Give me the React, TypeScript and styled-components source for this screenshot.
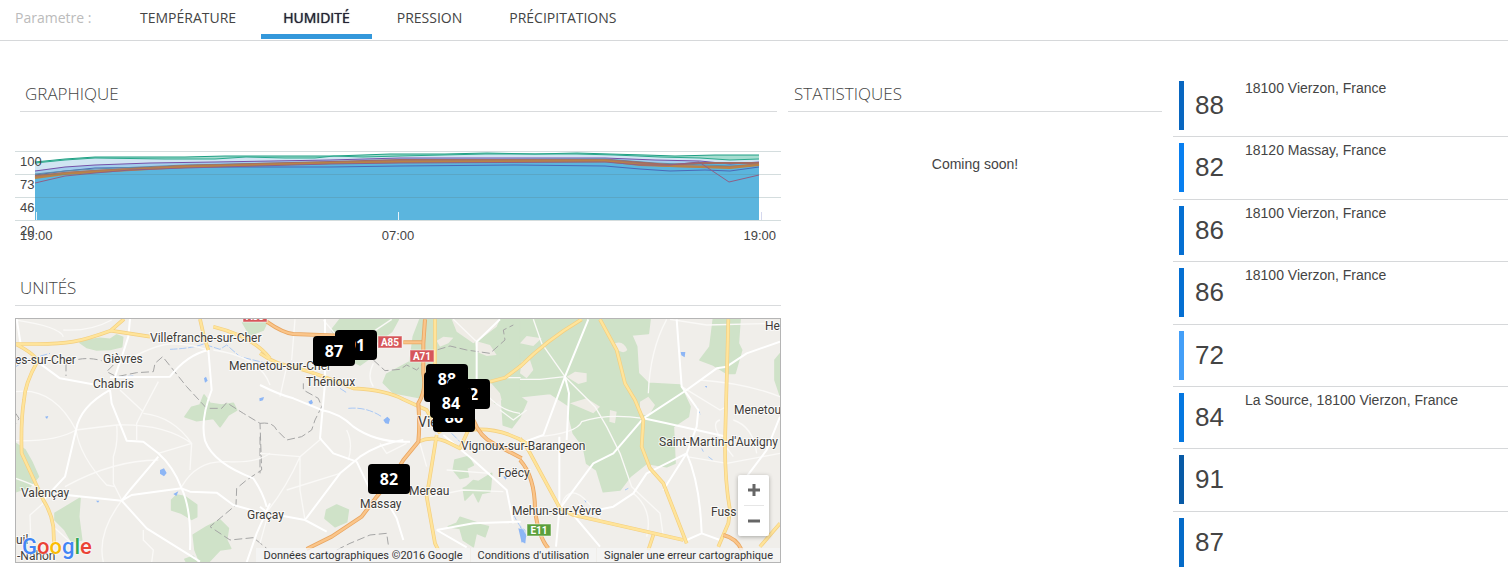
import React from 'react';
import styled, { createGlobalStyle, css } from 'styled-components';

const GlobalStyle = createGlobalStyle`
  *, *::before, *::after { box-sizing: border-box; }
  body {
    margin: 0;
    background: #fff;
    color: #444;
    font-family: 'Liberation Sans', Arial, sans-serif;
    font-size: 14px;
    line-height: 18px;
    overflow-x: hidden;
  }
`;

/* ---------- parameter bar ---------- */

const ParameterBar = styled.nav`
  display: flex;
  align-items: flex-start;
  height: 41px;
  padding-left: 15px;
  border-bottom: 1px solid #d6d8da;
  font-family: 'Open Sans', sans-serif;
  font-size: 14px;
`;

const ParameterLabel = styled.span`
  width: 103px;
  line-height: 36px;
  color: #bbb;
`;

const TabList = styled.div`
  display: flex;
  gap: 3px;
`;

const Tab = styled.button<{ $active?: boolean }>`
  height: 39px;
  padding: 2px 22px 0;
  border: 0;
  border-bottom: 5px solid transparent;
  background: none;
  color: #444;
  font: inherit;
  line-height: 32px;
  text-transform: uppercase;
  cursor: pointer;
  ${(p) =>
    p.$active &&
    css`
      border-bottom-color: #3498db;
      color: #223;
      text-shadow: 0 0 1px #223;
    `}
`;

/* ---------- page columns ---------- */

const Columns = styled.main`
  display: grid;
  grid-template-columns: 773fr 385fr 335fr;
  padding: 34px 0 0 15px;
`;

const ChartColumn = styled.div`
  min-width: 0;
  padding: 8px 7px 0 0;
`;

const StatsColumn = styled.section`
  min-width: 0;
  padding: 8px 11px 0 0;
`;

const Heading = styled.h2<{ $inset?: boolean }>`
  margin: 0 ${(p) => (p.$inset ? 4 : 0)}px 0 ${(p) => (p.$inset ? 5 : 0)}px;
  padding: 0 5px 6px;
  border-bottom: 1px solid #d9dbdd;
  color: #444;
  font: 300 17px/22px 'Open Sans', sans-serif;
  text-transform: uppercase;
`;

const StatsHeading = styled(Heading)`
  padding-left: 6px;
`;

const ComingSoon = styled.p`
  margin: 43px 0 0;
  text-align: center;
`;

/* ---------- chart ---------- */

const ChartBox = styled.div`
  position: relative;
  margin-top: 33px;
`;

const Plot = styled.svg`
  display: block;
  width: 100%;
  height: 76px;
`;

const YAxis = styled.div`
  position: absolute;
  top: 5px;
  left: 5px;
  display: flex;
  flex-direction: column;
  font-size: 13px;
  line-height: 23px;
`;

const XAxis = styled.div`
  display: flex;
  justify-content: space-between;
  padding: 0 5px;
  font-size: 13px;
  line-height: 30px;
`;

const series = [
  { color: '#1f9f84', width: 1, points: '20,17 50,14 80,12 170,12 210,11 320,11 375,9 430,9 472,8 520,9 562,8 595,9 630,10 660,11 700,10 744,10' },
  { color: '#2aa98c', width: 1, points: '20,18 50,15 80,13 150,14 200,14 231,12 270,13 300,13 319,11 348,12 385,11 470,9 562,9 600,10 645,12 685,13 715,15 744,14' },
  { color: '#7550a8', width: 1, points: '20,26 50,22 80,20 135,18 200,17 315,15 385,13 590,13 640,15 685,16 715,19 744,17' },
  { color: '#4a68b8', width: 1, points: '20,30 50,26 80,23 170,22 315,22 385,21 500,20 590,21 625,24 655,26 690,25 715,26 744,22' },
  { color: '#5f8fa8', width: 1, points: '20,29 50,26 80,24 170,20 315,17 385,15 590,14 640,18 715,21 744,20' },
  { color: '#a36a62', width: 2, points: '20,31 50,28 80,26 170,21 315,17 385,15 590,15 655,20 684,18 744,18' },
  { color: '#a9785e', width: 2, points: '20,32 50,28 80,26 170,21 315,18 385,16 590,15 625,19 655,21 715,22 744,19' },
  { color: '#b98346', width: 2, points: '20,33 50,29 80,27 170,22 315,18 385,17 590,16 625,20 655,21 715,23 744,20' },
  { color: '#8f5f86', width: 1, points: '20,38 50,31 80,28 115,25 170,23 315,19 385,18 590,17 625,20 655,20 684,17 714,37 744,30' },
];

function HumidityChart() {
  return (
    <ChartBox>
      <Plot viewBox="0 0 766 76" preserveAspectRatio="none" role="img" aria-label="Humidité">
        <polygon fill="#a5ddd0" points={`${series[0].points} 744,75 20,75`} />
        <polygon fill="#d0e5f2" points={`${series[1].points} 744,75 20,75`} />
        <polygon fill="#a3cdec" points={`${series[2].points} 744,75 20,75`} />
        <polygon fill="#5bb5de" points={`${series[5].points} 744,75 20,75`} />
        {series.map((s) => (
          <polyline key={s.color} points={s.points} fill="none" stroke={s.color} strokeWidth={s.width} vectorEffect="non-scaling-stroke" />
        ))}
        <path d="M0 6.5H766M0 29.5H766M0 52.5H766M0 75.5H766" stroke="#5a7a80" strokeOpacity=".26" />
        <path d="M21.5 67V75M383.5 67V75" stroke="#e6f3fa" />
        <path d="M746.5 67V75" stroke="#d5d8ee" />
      </Plot>
      <YAxis>
        <span>100</span>
        <span>73</span>
        <span>46</span>
        <span>20</span>
      </YAxis>
      <XAxis>
        <span>19:00</span>
        <span>07:00</span>
        <span>19:00</span>
      </XAxis>
    </ChartBox>
  );
}

/* ---------- map ---------- */

const UnitsSection = styled.section`
  margin-top: 26px;
`;

const MapFrame = styled.div`
  position: relative;
  height: 245px;
  margin-top: 12px;
  overflow: hidden;
  border: 1px solid #b5b5b5;
  background: #f0eeea;
  font-family: Roboto, sans-serif;
`;

const MapDrawing = styled.svg`
  display: block;
  width: 100%;
  height: 100%;
  font-size: 12px;
`;

const Marker = styled.button<{ $x: number; $y: number }>`
  position: absolute;
  left: ${(p) => (p.$x / 764) * 100}%;
  top: ${(p) => p.$y}px;
  width: 42px;
  height: 30px;
  padding: 0;
  border: 0;
  border-radius: 4px;
  background: #000;
  color: #fff;
  font: 700 16px/30px 'Open Sans', sans-serif;
  text-align: center;
`;

const ZoomControl = styled.div`
  position: absolute;
  right: 11px;
  bottom: 26px;
  display: flex;
  flex-direction: column;
  align-items: center;
  width: 31px;
  border-radius: 2px;
  background: #fff;
  box-shadow: 0 1px 4px rgba(0, 0, 0, 0.3);
`;

const ZoomButton = styled.button`
  display: grid;
  place-items: center;
  width: 100%;
  height: 30px;
  padding: 0;
  border: 0;
  background: none;
`;

const ZoomDivider = styled.span`
  width: 20px;
  height: 1px;
  background: #e6e6e6;
`;

const MapFooter = styled.div`
  position: absolute;
  right: 0;
  bottom: 0;
  display: flex;
  gap: 1px;
  color: #333;
  font-size: 11px;
  line-height: 12px;
`;

const footerItem = css`
  padding: 2px 7px 0;
  background: rgba(245, 245, 245, 0.75);
`;

const Credit = styled.span`
  ${footerItem}
`;

const FooterLink = styled.a`
  ${footerItem}
  color: inherit;
  text-decoration: none;
`;

const Logo = styled.a`
  position: absolute;
  left: 6px;
  bottom: 2px;
  font: 500 22px/26px Roboto, sans-serif;
  text-decoration: none;
  text-shadow: 0 0 2px #fff, 0 0 2px #fff;
`;

const LogoLetter = styled.span<{ $color: string }>`
  color: ${(p) => p.$color};
`;

interface Tile {
  x: number;
  forest: string;
  clearing: string;
  lane: string;
  road: string;
  main: string;
  motorway: string;
  border: string;
  river: string;
  lake: string;
}

/* Terrain is drawn at three units per map pixel, one tile per third of the map. */
const tiles: Tile[] = [
  {
    x: -16,
    forest:
      'M240 218L262 210 300 205 330 208 350 195 368 202 365 230 330 238 290 240 260 232ZM555 440L575 412 600 405 612 375 630 400 665 405 700 400 710 420 685 435 660 470 640 445 590 452ZM47 520L75 540 95 575 115 620 90 650 47 665ZM165 730L240 685 236 740 245 810 215 815 195 780 165 750ZM515 690L530 675 555 680 590 705 590 740 575 748 545 730 515 720ZM580 795L620 770 660 750 685 775 680 810 692 835 660 840 625 877 600 877 585 840ZM555 868L580 859 590 877 560 877ZM728 158L800 158 790 180 750 195Z',
    clearing: '',
    lane:
      'M47 150Q180 170 190 200M190 180Q270 185 335 150M375 275Q460 225 510 222T625 240M47 365Q160 350 228 480Q240 560 320 645L345 650M47 512Q170 515 228 480L350 465Q490 460 575 520L570 600M195 650Q340 570 475 570M350 465Q355 520 340 560V640L365 690M545 650Q590 570 680 575T810 550M475 335L430 420 410 460V510M430 430Q520 440 575 520L475 550M360 360L430 425M365 692Q290 790 310 877M430 780V810L460 840 455 877M92 800L90 735 130 700M47 625Q90 640 110 650M160 770L215 820M640 240Q780 260 810 345',
    road:
      'M50 147L62 222M390 147L385 200 372 240 345 320M112 275L180 325 290 345M625 240Q560 255 510 320L330 322M330 360L335 400 380 512 430 515 475 550Q520 590 545 655Q575 720 570 840M330 360Q240 410 228 480L195 620 130 690M200 675L365 692 440 775 600 875M365 692L395 675 545 655 570 665 650 668 700 705 790 730M625 240L635 360Q600 450 615 512Q640 580 760 625Q790 670 800 710M810 700L770 790 740 877M365 692L390 660 475 560',
    main:
      'M47 222H110Q180 222 220 215T332 182L372 147M332 182L450 200M47 222Q110 255 112 275Q75 340 72 390Q62 450 65 550L130 690Q155 730 160 770L162 820M600 147L612 200 625 240M640 170Q760 200 810 265',
    motorway: '',
    border:
      'M235 268Q270 262 305 272M198 280V318M340 285L320 305 350 320 410 308 460 305 465 280 488 260 560 350 620 415 665 415 680 398 730 430 780 460 785 600 740 630 710 655 708 705 630 770 690 810 760 803 800 835M47 430L57 445 50 460',
    river: 'M510 238Q580 235 610 222L660 238 680 225 720 260 800 280M47 290L80 270 150 250M330 322L400 318',
    lake: 'M480 600l12 -5 8 14 -8 10 -12 -8ZM520 672l15 -8 -6 14ZM612 325l6 -5 5 12 -8 6ZM778 385l14 -4 -3 10 -10 3ZM135 440l10 -2 -4 9ZM288 692l10 0 -4 6Z',
  },
  {
    x: 244,
    forest:
      'M240 28H415L395 65 345 100 350 130 300 165 270 150 215 60ZM460 80L480 28H782V262L800 275 780 320 755 353 730 345 725 268 690 215 500 255 480 263 400 248 370 218 380 193 450 155ZM585 450L625 440 640 465 620 475 625 500 600 505 580 480ZM620 530L640 512 655 515 695 490 690 545 665 550 655 575 640 545 615 570 610 535ZM200 600L230 585 265 600 260 635 225 650 195 625ZM565 650L590 640 600 622 655 640 640 710 610 690 600 655ZM640 640L685 650 675 680 650 670ZM695 260L715 255 705 280Z',
    clearing:
      'M575 28L590 65 640 100 665 85 710 50 720 28ZM645 92L690 105 710 135 680 138 650 125ZM530 92L550 80 580 83 565 100 540 110ZM690 215L720 250 725 270 680 290 660 230Z',
    lane:
      'M120 440V540L135 630M0 430L120 440 185 385M80 540L240 490M25 600Q80 530 120 440M105 28L95 150M190 30L250 100M340 160Q320 200 340 230M395 28L340 65M260 360Q280 400 265 450M480 400L500 470M510 560L610 540 730 545M720 300L760 330 800 300M690 490L560 480M0 700L25 610M360 400L380 430 440 400M80 170L60 260M650 210Q700 300 780 310M580 28L650 95M735 203H782',
    road:
      'M0 225Q60 255 100 265L185 300Q240 310 280 350Q350 400 450 395M195 28V220L180 385 220 430 290 455M390 590L410 625 430 690M25 610L135 630 200 665M135 630L240 490 300 440Q360 400 430 390M550 375L640 450 740 540 760 640M530 660L640 640 782 635M720 28L650 95V210M290 455L335 550M530 660L620 712M0 590L25 610',
    main:
      'M525 28V180M0 130Q50 165 100 170Q200 200 280 235Q380 240 430 268L500 300 540 370M475 395Q520 375 570 400L600 415 625 360Q720 350 800 400M530 375L500 560 525 700 535 720M690 215L735 203 782 168',
    motorway:
      'M20 35Q70 70 100 72L260 78M430 97H485M495 28L490 100V190Q500 240 475 280Q480 350 475 395L430 450 400 500 350 560 305 620 215 680 140 717M640 330Q660 380 700 400L785 445',
    border:
      'M0 340Q40 335 50 360L80 390 125 380 155 360 165 330 185 290 175 265 130 240V220M0 380V490M340 150L375 182 420 178 440 165 470 180 530 120 570 108 620 120 690 130 735 90 730 60 760 45M230 720L270 700 330 675 380 670 385 705',
    river: 'M265 295Q320 290 365 320M240 235L260 248M575 370L600 395M760 610Q775 650 795 660V700',
    lake: 'M370 330l12 -10 8 8 -4 14 -10 -2ZM145 275l10 -6 4 10 -8 6ZM730 500l15 -5 -8 14ZM775 655l16 5 4 30 -10 8Z',
  },
  {
    x: 504,
    forest:
      'M0 28H390L385 70 335 75 350 110 355 190 385 220 480 225 510 290 505 320 460 350 465 460 440 470 380 460 330 500 300 540 250 545 230 480 200 460 190 410 160 370 145 310 150 290 90 250 0 260ZM580 28H660L655 100 665 120 645 190 620 190 580 165 540 150 570 110ZM782 130L765 150V210L782 260Z',
    clearing:
      'M285 100Q310 90 322 120Q310 135 285 115ZM140 200L165 185 200 190V215L175 222ZM270 300L290 305 285 340 268 335ZM360 275L385 260 405 285 385 320 360 310ZM0 100L20 78 65 85 40 108ZM5 155L30 150 40 180 20 205 0 190ZM150 280L200 265 240 290 220 310Z',
    lane:
      'M40 28L65 100 135 200 225 290 260 350 300 430 335 530 420 610 430 680M0 208H60L135 200M50 380Q170 370 185 335Q260 310 370 325M440 28Q390 120 385 250M485 230L600 300 620 290M540 210Q680 220 780 260M500 440L620 460 780 430M120 600Q150 480 250 640M450 28L560 45 780 40M600 330Q560 340 640 440M340 550Q400 600 380 680M640 330Q700 350 710 430',
    road:
      'M205 28L135 200 70 375 0 400M135 200L147 250 140 390M370 325L500 240 590 175 620 170 680 130 780 95M370 325L280 430 220 460 120 595M370 325L440 340 620 380M470 28L485 230 535 300 530 350 500 430 430 540M500 430L380 490 340 550 280 590 160 615M500 430Q540 520 545 670L500 690M780 320L740 420 680 500M118 380V600L108 710M160 615L240 710M545 670L600 690',
    main:
      'M0 170Q80 90 185 28M240 28L290 120 315 220 345 270 370 330 365 410 390 475 430 520 500 700M625 28L615 400Q615 520 630 600L625 640 595 710M0 385L25 420 120 595 160 615 490 690M400 675L385 720M780 640L720 710',
    motorway: 'M0 450Q45 500 45 600Q55 680 85 715M610 675Q650 685 665 720',
    border: '',
    river: 'M530 290L542 315M545 415L550 425M565 440L578 450M315 540L325 535M0 650L18 680',
    lake: 'M482 126l14 0 -2 16 -10 -6ZM193 570l8 0 -3 8ZM555 228l6 0 -2 6ZM5 655l14 20 -4 25 -10 -5Z',
  },
];

const towns: [string, number, number, number?][] = [
  ['Villefranche-sur-Cher', 134, 23],
  ['es-sur-Cher', -1, 45],
  ['Gièvres', 87, 44],
  ['Chabris', 77, 69],
  ['Mennetou-sur-Cher', 213, 51],
  ['Thénioux', 290, 67],
  ['Vierzon', 402, 108, 14],
  ['Vignoux-sur-Barangeon', 445, 131],
  ['Foëcy', 482, 158],
  ["Saint-Martin-d'Auxigny", 643, 127],
  ['Menetou', 718, 95],
  ['He', 749, 11],
  ['Valençay', 5, 178],
  ['Graçay', 231, 200],
  ['Mereau', 393, 176],
  ['Massay', 344, 189],
  ['Mehun-sur-Yèvre', 496, 196],
  ['Fuss', 695, 197],
  ['uil', 0, 225],
  ['-Nahon', 1, 241],
];

const shields = [
  { name: 'A88', x: 227, y: -9, color: '#d6565a' },
  { name: 'A85', x: 362, y: 17, color: '#d6565a' },
  { name: 'A71', x: 394, y: 31, color: '#d6565a' },
  { name: 'E11', x: 511, y: 205, color: '#5b9f3c' },
];

const markers = [
  { value: 91, x: 319, y: 11 },
  { value: 87, x: 297, y: 17 },
  { value: 86, x: 408, y: 53 },
  { value: 88, x: 410, y: 45 },
  { value: 72, x: 432, y: 60 },
  { value: 86, x: 417, y: 83 },
  { value: 84, x: 414, y: 69 },
  { value: 82, x: 352, y: 145 },
];

const layers: { key: Exclude<keyof Tile, 'x'>; props: React.SVGProps<SVGPathElement> }[] = [
  { key: 'forest', props: { fill: '#cfe2c8', strokeLinejoin: 'round', stroke: '#cfe2c8', strokeWidth: 5 } },
  { key: 'clearing', props: { fill: '#efece6' } },
  { key: 'river', props: { fill: 'none', stroke: '#a9c8f5', strokeWidth: 3, strokeDasharray: '22 5' } },
  { key: 'lake', props: { fill: '#8db6f5' } },
  { key: 'border', props: { fill: 'none', stroke: '#a5a5a5', strokeWidth: 3, strokeDasharray: '24 10' } },
  { key: 'lane', props: { fill: 'none', stroke: '#faf9f7', strokeWidth: 4 } },
  { key: 'road', props: { fill: 'none', stroke: '#fff', strokeWidth: 6 } },
  { key: 'main', props: { fill: 'none', stroke: '#f3cf80', strokeWidth: 11 } },
  { key: 'main', props: { fill: 'none', stroke: '#ffe49a', strokeWidth: 7 } },
  { key: 'motorway', props: { fill: 'none', stroke: '#e9a661', strokeWidth: 12 } },
  { key: 'motorway', props: { fill: 'none', stroke: '#fac58a', strokeWidth: 7 } },
];

function Terrain() {
  return (
    <MapDrawing viewBox="0 0 764 243" preserveAspectRatio="xMidYMid slice" aria-hidden="true">
      {layers.map((layer, i) =>
        tiles.map((tile) => (
          <path
            key={`${i}${tile.x}`}
            d={tile[layer.key]}
            transform={`translate(${tile.x} ${tile.x < 0 ? -49 : -9}) scale(.33333)`}
            strokeLinejoin="round"
            {...layer.props}
          />
        )),
      )}
      {shields.map((s) => (
        <g key={s.name}>
          <rect x={s.x} y={s.y} width="24" height="12" fill={s.color} stroke="#fff" strokeOpacity=".5" />
          <text x={s.x + 12} y={s.y + 10} fill="#fff" fontSize="10" fontWeight="700" textAnchor="middle">
            {s.name}
          </text>
        </g>
      ))}
      <g fill="#403c38" stroke="#fff" strokeOpacity=".7" strokeWidth="2" paintOrder="stroke">
        {towns.map(([name, x, y, size]) => (
          <text key={name} x={x} y={y} fontSize={size}>
            {name}
          </text>
        ))}
      </g>
    </MapDrawing>
  );
}

const logoLetters: [string, string][] = [
  ['G', '#4285f4'],
  ['o', '#ea4335'],
  ['o', '#fbbc05'],
  ['g', '#4285f4'],
  ['l', '#34a853'],
  ['e', '#ea4335'],
];

function UnitsMap() {
  return (
    <MapFrame>
      <Terrain />
      {markers.map((m, i) => (
        <Marker key={i} type="button" $x={m.x} $y={m.y}>
          {m.value}
        </Marker>
      ))}
      <Logo href="#maps" aria-label="Google">
        {logoLetters.map(([letter, color], i) => (
          <LogoLetter key={i} $color={color}>
            {letter}
          </LogoLetter>
        ))}
      </Logo>
      <MapFooter>
        <Credit>Données cartographiques ©2016 Google</Credit>
        <FooterLink href="#terms">Conditions d'utilisation</FooterLink>
        <FooterLink href="#report">Signaler une erreur cartographique</FooterLink>
      </MapFooter>
      <ZoomControl>
        <ZoomButton type="button" aria-label="Zoom avant">
          <svg width="12" height="12" viewBox="0 0 12 12">
            <path d="M0 6H12M6 0V12" stroke="#666" strokeWidth="3" />
          </svg>
        </ZoomButton>
        <ZoomDivider />
        <ZoomButton type="button" aria-label="Zoom arrière">
          <svg width="12" height="12" viewBox="0 0 12 12">
            <path d="M0 6H12" stroke="#666" strokeWidth="3" />
          </svg>
        </ZoomButton>
      </ZoomControl>
    </MapFrame>
  );
}

/* ---------- readings ---------- */

const ReadingList = styled.ul`
  display: grid;
  grid-auto-rows: 1fr;
  align-self: start;
  min-width: 0;
  min-height: 499px;
  margin: 0;
  padding: 0;
  list-style: none;
`;

const Reading = styled.li`
  display: flex;
  align-items: flex-start;
  padding: 6px 6px 0;
  border-bottom: 1px solid #d6d8da;
`;

const ReadingValue = styled.span<{ $color: string }>`
  width: 66px;
  padding-left: 11px;
  border-left: 5px solid ${(p) => p.$color};
  font-size: 26px;
  line-height: 49px;
`;

const Address = styled.span`
  line-height: 14px;
`;

const readings = [
  { value: 88, color: '#0866c0', address: '18100 Vierzon, France' },
  { value: 82, color: '#087ff0', address: '18120 Massay, France' },
  { value: 86, color: '#056fd2', address: '18100 Vierzon, France' },
  { value: 86, color: '#056fd2', address: '18100 Vierzon, France' },
  { value: 72, color: '#449ff8', address: '' },
  { value: 84, color: '#0577e0', address: 'La Source, 18100 Vierzon, France' },
  { value: 91, color: '#085aa6', address: '' },
  { value: 87, color: '#056bc8', address: '' },
];

const parameters = ['Température', 'Humidité', 'Pression', 'Précipitations'];

export default function App() {
  return (
    <>
      <GlobalStyle />
      <ParameterBar>
        <ParameterLabel id="parameter-label">Parametre :</ParameterLabel>
        <TabList role="tablist" aria-labelledby="parameter-label">
          {parameters.map((name) => (
            <Tab key={name} type="button" role="tab" aria-selected={name === 'Humidité'} $active={name === 'Humidité'}>
              {name}
            </Tab>
          ))}
        </TabList>
      </ParameterBar>
      <Columns>
        <ChartColumn>
          <section>
            <Heading $inset>Graphique</Heading>
            <HumidityChart />
          </section>
          <UnitsSection>
            <Heading>Unités</Heading>
            <UnitsMap />
          </UnitsSection>
        </ChartColumn>
        <StatsColumn>
          <StatsHeading>Statistiques</StatsHeading>
          <ComingSoon>Coming soon!</ComingSoon>
        </StatsColumn>
        <ReadingList>
          {readings.map((r, i) => (
            <Reading key={i}>
              <ReadingValue $color={r.color}>{r.value}</ReadingValue>
              <Address>{r.address}</Address>
            </Reading>
          ))}
        </ReadingList>
      </Columns>
    </>
  );
}
